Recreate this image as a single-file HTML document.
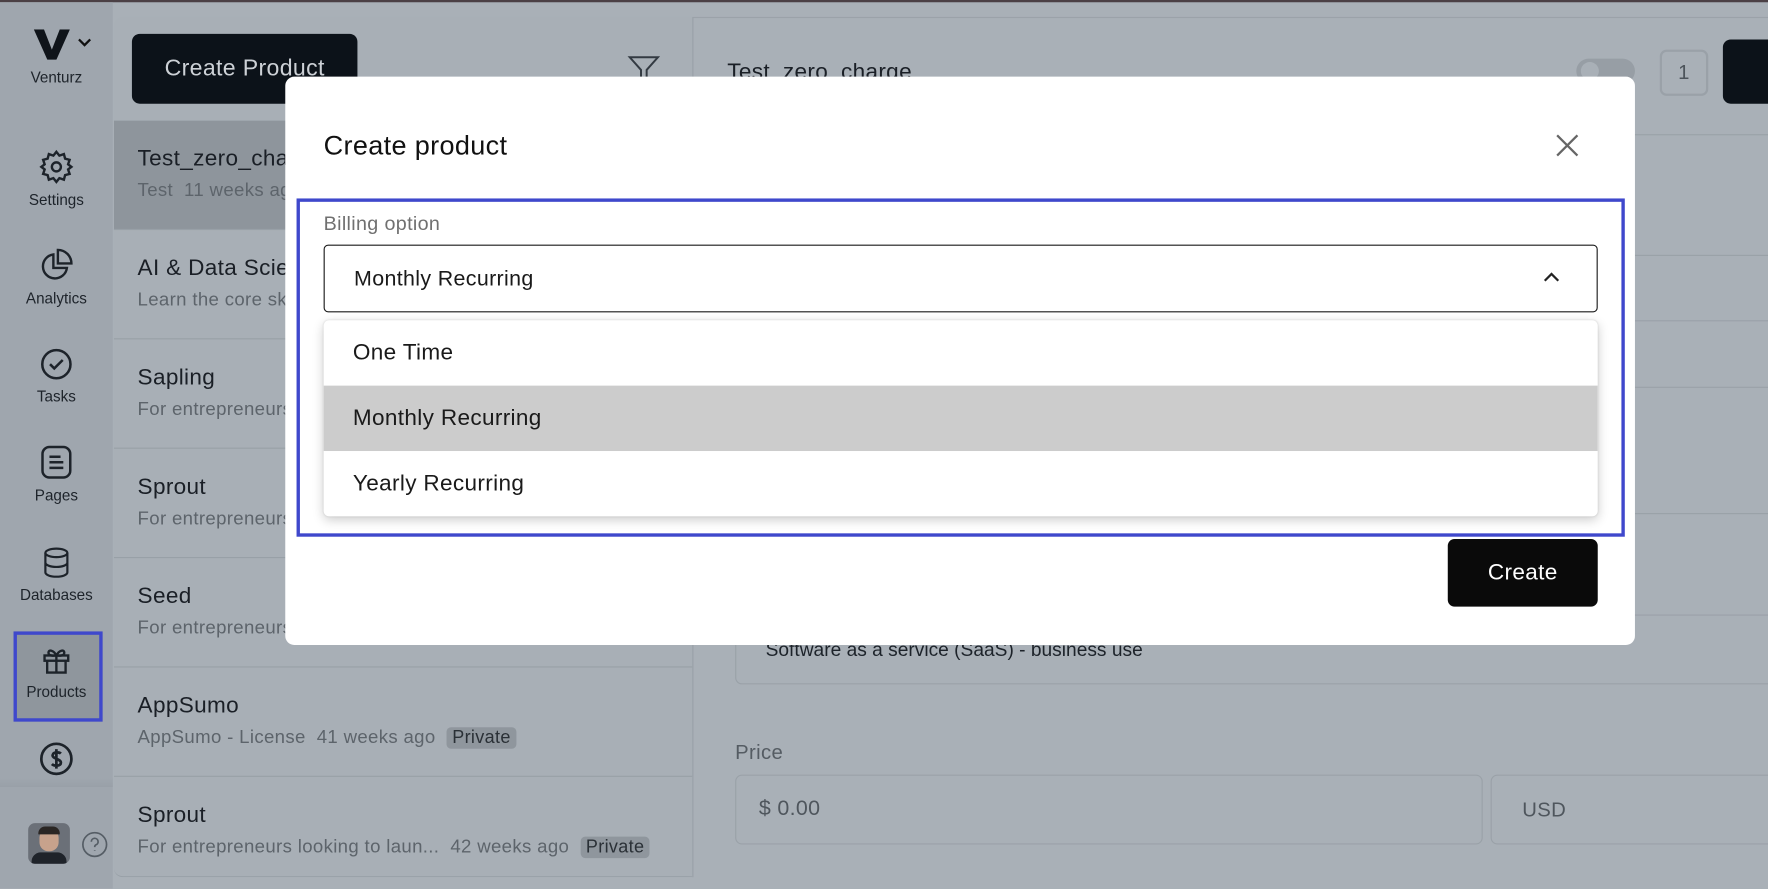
<!DOCTYPE html>
<html><head><meta charset="utf-8"><style>
*{box-sizing:border-box;margin:0;padding:0}
html,body{width:1768px;height:888px;overflow:hidden;background:#a9b0b7;font-family:"Liberation Sans",sans-serif}
#w{position:absolute;left:0;top:0;width:1568px;height:788px;transform:scale(1.12755);transform-origin:0 0;background:#a9b0b7;letter-spacing:0.3px}
.a{position:absolute}
.sb{left:0;top:2px;width:100px;height:786px;background:#9fa6ae}
.nav{position:absolute;left:0;width:100px;text-align:center;font-size:13.5px;color:#1d232a;letter-spacing:0}
.nav svg{display:block;margin:0 auto 6px}
.list{left:101px;top:15px;width:513px;height:763px;background:#a8afb6;border-radius:8px 0 0 8px;overflow:hidden;border-bottom:1px solid #98a0a7}
.it{position:absolute;left:0;width:513px;height:97px;border-bottom:1px solid #98a0a7}
.it .t{position:absolute;left:21px;top:23px;font-size:20px;color:#1a1f26}
.it .s{position:absolute;left:21px;top:53px;font-size:16.5px;color:#5d646b;white-space:nowrap}
.pv{background:#8f969d;color:#2a3036;border-radius:4px;padding:1px 5px;font-size:16px}
.modal{left:253px;top:68px;width:1197px;height:504px;background:#fff;border-radius:8px}
.opt{position:absolute;left:0;width:1130px;height:58px;font-size:20px;color:#1a1a1a;padding:18px 0 0 26px}
</style></head><body><div id="w">
<div class="a" style="left:0;top:0;width:1568px;height:2px;background:#4b4045"></div>
<div class="a sb"></div>
<svg class="a" style="left:30px;top:26px" width="32" height="27" viewBox="0 0 32 27"><path d="M0 0h9l7 18 7-18h9L20 27h-8z" fill="#0f141a"/></svg>
<svg class="a" style="left:69px;top:34px" width="12" height="8"><path d="M1 1l5 5 5-5" stroke="#111" stroke-width="2" fill="none"/></svg>
<div class="nav" style="top:61px">Venturz</div>
<div class="nav" style="top:132px"><svg width="32" height="32" viewBox="0 0 24 24" fill="none" stroke="#1d232a" stroke-width="1.6"><circle cx="12" cy="12" r="3"/><path d="M12 2l2 2.5 3-1 .8 3 3 .8-1 3L22 12l-2.2 1.7 1 3-3 .8-.8 3-3-1L12 22l-2-2.5-3 1-.8-3-3-.8 1-3L2 12l2.2-1.7-1-3 3-.8.8-3 3 1z"/></svg>Settings</div>
<div class="nav" style="top:219px"><svg width="32" height="32" viewBox="0 0 24 24" fill="none" stroke="#1d232a" stroke-width="1.6"><path d="M10 5a8 8 0 1 0 9 9h-9z"/><path d="M13 2a9 9 0 0 1 9 9h-9z"/></svg>Analytics</div>
<div class="nav" style="top:308px"><svg width="30" height="30" viewBox="0 0 24 24" fill="none" stroke="#1d232a" stroke-width="1.8"><circle cx="12" cy="12" r="10"/><path d="M7.5 12l3 3 6-6"/></svg>Tasks</div>
<div class="nav" style="top:394px"><svg width="30" height="32" viewBox="0 0 24 26" fill="none" stroke="#1d232a" stroke-width="1.8"><rect x="2" y="2" width="20" height="22" rx="5"/><path d="M7 9h8M7 13h10M7 17h10"/></svg>Pages</div>
<div class="nav" style="top:484px"><svg width="26" height="30" viewBox="0 0 24 26" fill="none" stroke="#1d232a" stroke-width="1.8"><ellipse cx="12" cy="5" rx="9" ry="3.5"/><path d="M3 5v16c0 2 4 3.5 9 3.5s9-1.5 9-3.5V5M3 13c0 2 4 3.5 9 3.5s9-1.5 9-3.5"/></svg>Databases</div>
<div class="a" style="left:12px;top:560px;width:79px;height:80px;border:3px solid #3f48cc;background:#8f969d"></div>
<div class="nav" style="top:572px"><svg width="28" height="28" viewBox="0 0 24 24" fill="none" stroke="#1d232a" stroke-width="1.8"><rect x="3" y="8" width="18" height="4"/><path d="M5 12v9h14v-9M12 8v13M12 8c-2-4-6-5-6-2s6 2 6 2c2-4 6-5 6-2s-6 2-6 2"/></svg>Products</div>
<svg class="a" style="left:34px;top:657px" width="32" height="32" viewBox="0 0 24 24" fill="none" stroke="#1d232a" stroke-width="1.8"><circle cx="12" cy="12" r="10"/><path d="M15 8.5c-1-1-5-1.5-5.5 1S15 12 15 14.5s-4.5 2.5-6 1M12 5.5v13"/></svg>
<div class="a" style="left:0;top:690px;width:100px;height:8px;background:linear-gradient(#9fa6ae,#99a0a8)"></div>
<div class="a" style="left:25px;top:730px;width:37px;height:36px;border-radius:6px;background:#6b7078;overflow:hidden"><div class="a" style="left:10px;top:5px;width:17px;height:20px;border-radius:8px;background:#c7a28c"></div><div class="a" style="left:9px;top:3px;width:19px;height:7px;border-radius:6px 6px 0 0;background:#2a2624"></div><div class="a" style="left:3px;top:26px;width:31px;height:12px;border-radius:8px 8px 0 0;background:#1f232a"></div></div>
<svg class="a" style="left:72px;top:737px" width="24" height="24" viewBox="0 0 24 24" fill="none" stroke="#555d65" stroke-width="1.5"><circle cx="12" cy="12" r="10.5"/><path d="M9 9.5a3 3 0 1 1 4 2.8c-.8.4-1 1-1 2M12 17v.5"/></svg>

<div class="a list">
<div class="a" style="left:16px;top:15px;width:200px;height:62px;background:#0c1219;border-radius:7px;color:#cdd1d6;font-size:20.5px;text-align:center;line-height:62px">Create Product</div>
<svg class="a" style="left:455px;top:32px" width="30" height="30" viewBox="0 0 24 24" fill="none" stroke="#333a42" stroke-width="1.4"><path d="M2 3h20l-8 9v8l-4 2V12z"/></svg>
<div class="it" style="top:92px;background:#8e959c"><div class="t">Test_zero_charge</div><div class="s">Test&nbsp; 11 weeks ago</div></div>
<div class="it" style="top:189px"><div class="t">AI &amp; Data Science</div><div class="s">Learn the core skills</div></div>
<div class="it" style="top:286px"><div class="t">Sapling</div><div class="s">For entrepreneurs</div></div>
<div class="it" style="top:383px"><div class="t">Sprout</div><div class="s">For entrepreneurs</div></div>
<div class="it" style="top:480px"><div class="t">Seed</div><div class="s">For entrepreneurs</div></div>
<div class="it" style="top:577px"><div class="t">AppSumo</div><div class="s">AppSumo - License&nbsp; 41 weeks ago&nbsp; <span class="pv">Private</span></div></div>
<div class="it" style="top:674px;border-bottom:0"><div class="t">Sprout</div><div class="s">For entrepreneurs looking to laun...&nbsp; 42 weeks ago&nbsp; <span class="pv">Private</span></div></div>
</div>
<div class="a" style="left:614px;top:15px;width:1px;height:763px;background:#98a0a7"></div>
<div class="a" style="left:615px;top:15px;width:953px;height:1px;background:#9ba2a9"></div>
<div class="a" style="left:645px;top:53px;font-size:20px;color:#1a1f26">Test_zero_charge</div>
<div class="a" style="left:1398px;top:52px;width:52px;height:22px;border-radius:11px;background:#979ea5"><div class="a" style="left:4px;top:3px;width:16px;height:16px;border-radius:8px;background:#a9b0b7"></div></div>
<div class="a" style="left:1472px;top:44px;width:43px;height:41px;border:2px solid #9aa1a8;border-radius:6px;text-align:center;line-height:37px;color:#4d545b;font-size:18px">1</div>
<div class="a" style="left:1528px;top:35px;width:60px;height:57px;background:#0c1219;border-radius:7px"></div>
<div class="a" style="left:615px;top:119px;width:953px;height:1px;background:#9aa1a8"></div>
<div class="a" style="left:1450px;top:226px;width:118px;height:1px;background:#9aa1a8"></div>
<div class="a" style="left:1450px;top:284px;width:118px;height:1px;background:#9aa1a8"></div>
<div class="a" style="left:1450px;top:343px;width:118px;height:1px;background:#9aa1a8"></div>
<div class="a" style="left:1450px;top:455px;width:118px;height:1px;background:#9aa1a8"></div>
<div class="a" style="left:652px;top:545px;width:930px;height:62px;border:1px solid #9aa1a8;border-radius:6px;padding:21px 0 0 26px;font-size:17px;color:#1d232a;letter-spacing:0">Software as a service (SaaS) - business use</div>
<div class="a" style="left:652px;top:657px;font-size:18px;color:#555c63">Price</div>
<div class="a" style="left:652px;top:687px;width:663px;height:62px;border:1px solid #9aa1a8;border-radius:6px;padding:19px 0 0 20px;font-size:19px;color:#4f565d">$ 0.00</div>
<div class="a" style="left:1322px;top:687px;width:260px;height:62px;border:1px solid #9aa1a8;border-radius:6px;padding:20px 0 0 27px;font-size:18px;color:#4f565d">USD</div>

<div class="a modal">
<div class="a" style="left:34px;top:48px;font-size:24px;color:#111">Create product</div>
<svg class="a" style="left:1127px;top:51px" width="20" height="20"><path d="M1 1l18 18M19 1L1 19" stroke="#666" stroke-width="2"/></svg>
<div class="a" style="left:10px;top:108px;width:1178px;height:300px;border:3px solid #3f48cc"></div>
<div class="a" style="left:34px;top:120px;font-size:17.5px;color:#707070">Billing option</div>
<div class="a" style="left:34px;top:149px;width:1130px;height:60px;border:1px solid #1a1a1a;border-radius:4px;padding:19px 0 0 26px;font-size:19px;color:#1a1a1a">Monthly Recurring</div>
<svg class="a" style="left:1116px;top:173px" width="14" height="9"><path d="M1 8l6-6 6 6" stroke="#222" stroke-width="2" fill="none"/></svg>
<div class="a" style="left:34px;top:216px;width:1130px;height:174px;background:#fff;border-radius:5px;box-shadow:0 3px 10px rgba(0,0,0,.2),0 0 2px rgba(0,0,0,.12);overflow:hidden">
<div class="opt" style="top:0">One Time</div>
<div class="opt" style="top:58px;background:#cccccc">Monthly Recurring</div>
<div class="opt" style="top:116px">Yearly Recurring</div>
</div>
<div class="a" style="left:1031px;top:410px;width:133px;height:60px;background:#0a0a0a;border-radius:6px;color:#fff;font-size:20px;text-align:center;line-height:60px">Create</div>
</div>
</div></body></html>
